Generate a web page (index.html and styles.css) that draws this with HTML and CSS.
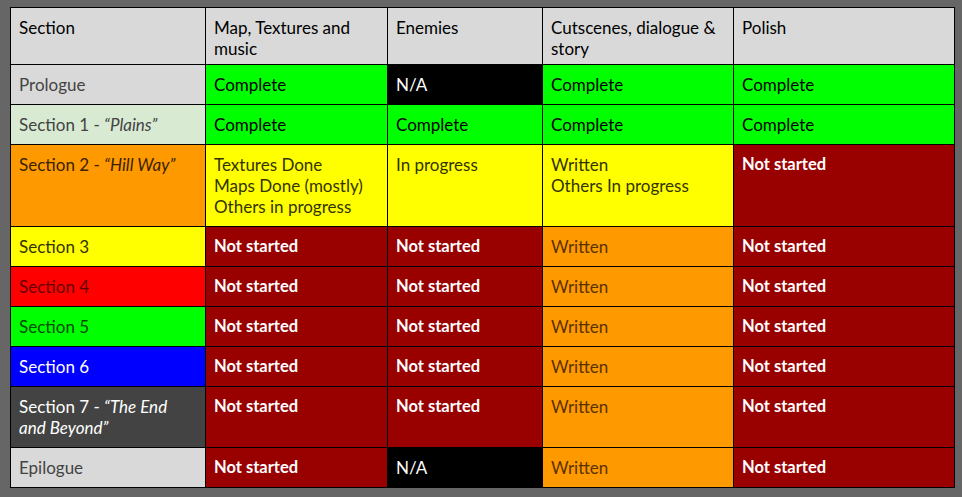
FILE: index.html
```html
<!DOCTYPE html>
<html>
<head>
<meta charset="utf-8">
<link rel="stylesheet" href="styles.css">
</head>
<body>
<table class="sheet">
  <colgroup>
    <col class="c1"><col class="c2"><col class="c3"><col class="c4"><col class="c5">
  </colgroup>
  <tr class="head">
    <td>Section</td>
    <td>Map, Textures and<br>music</td>
    <td>Enemies</td>
    <td>Cutscenes, dialogue &amp;<br>story</td>
    <td>Polish</td>
  </tr>
  <tr>
    <td class="s-grey">Prologue</td>
    <td class="done">Complete</td>
    <td class="na">N/A</td>
    <td class="done">Complete</td>
    <td class="done">Complete</td>
  </tr>
  <tr>
    <td class="s-mint">Section 1 - <i>“Plains”</i></td>
    <td class="done">Complete</td>
    <td class="done">Complete</td>
    <td class="done">Complete</td>
    <td class="done">Complete</td>
  </tr>
  <tr>
    <td class="s-orange">Section 2 - <i>“Hill Way”</i></td>
    <td class="prog">Textures Done<br>Maps Done (mostly)<br>Others in progress</td>
    <td class="prog">In progress</td>
    <td class="prog">Written<br>Others In progress</td>
    <td class="todo">Not started</td>
  </tr>
  <tr>
    <td class="s-yellow">Section 3</td>
    <td class="todo">Not started</td>
    <td class="todo">Not started</td>
    <td class="written">Written</td>
    <td class="todo">Not started</td>
  </tr>
  <tr>
    <td class="s-red">Section 4</td>
    <td class="todo">Not started</td>
    <td class="todo">Not started</td>
    <td class="written">Written</td>
    <td class="todo">Not started</td>
  </tr>
  <tr>
    <td class="s-green">Section 5</td>
    <td class="todo">Not started</td>
    <td class="todo">Not started</td>
    <td class="written">Written</td>
    <td class="todo">Not started</td>
  </tr>
  <tr>
    <td class="s-blue">Section 6</td>
    <td class="todo">Not started</td>
    <td class="todo">Not started</td>
    <td class="written">Written</td>
    <td class="todo">Not started</td>
  </tr>
  <tr>
    <td class="s-dark">Section 7 - <i>“The End<br>and Beyond”</i></td>
    <td class="todo">Not started</td>
    <td class="todo">Not started</td>
    <td class="written">Written</td>
    <td class="todo">Not started</td>
  </tr>
  <tr>
    <td class="s-grey">Epilogue</td>
    <td class="todo">Not started</td>
    <td class="na">N/A</td>
    <td class="written">Written</td>
    <td class="todo">Not started</td>
  </tr>
</table>
</body>
</html>
```

FILE: styles.css
```css
html, body {
  margin: 0;
  padding: 0;
  background: #666666;
}

body {
  padding: 7px 0 0 10px;
  font-family: Lato, "Open Sans", sans-serif;
  font-size: 17px;
  line-height: 21px;
}

.sheet {
  border-collapse: collapse;
  table-layout: fixed;
  width: 944px;
}

.c1 { width: 195px; }
.c2 { width: 182px; }
.c3 { width: 155px; }
.c4 { width: 191px; }
.c5 { width: 221px; }

.sheet td {
  border: 1px solid #000;
  padding: 9px 8px 9px 8px;
  vertical-align: top;
  color: #000;
  white-space: nowrap;
}

.head td {
  background: #d9d9d9;
  color: #000;
  padding-bottom: 5px;
}

.s-grey { background: #d9d9d9; color: #434343 !important; }
.s-mint { background: #d9ead3; color: #434343 !important; }
.s-orange { background: #ff9900; color: #3a2300 !important; }
.s-yellow { background: #ffff00; color: #333300 !important; }
.s-red { background: #ff0000; color: #660000 !important; }
.s-green { background: #00ff00; color: #004d00 !important; }
.s-blue { background: #0000ff; color: #ffffff !important; }
.s-dark { background: #434343; color: #ffffff !important; }

.done { background: #00ff00; }
.na { background: #000000; color: #ffffff !important; }
.prog { background: #ffff00; color: #333300 !important; }
.todo { background: #990000; color: #ffffff !important; font-weight: bold; font-size: 16.5px; }
.written { background: #ff9900; color: #5a3200 !important; }
```
